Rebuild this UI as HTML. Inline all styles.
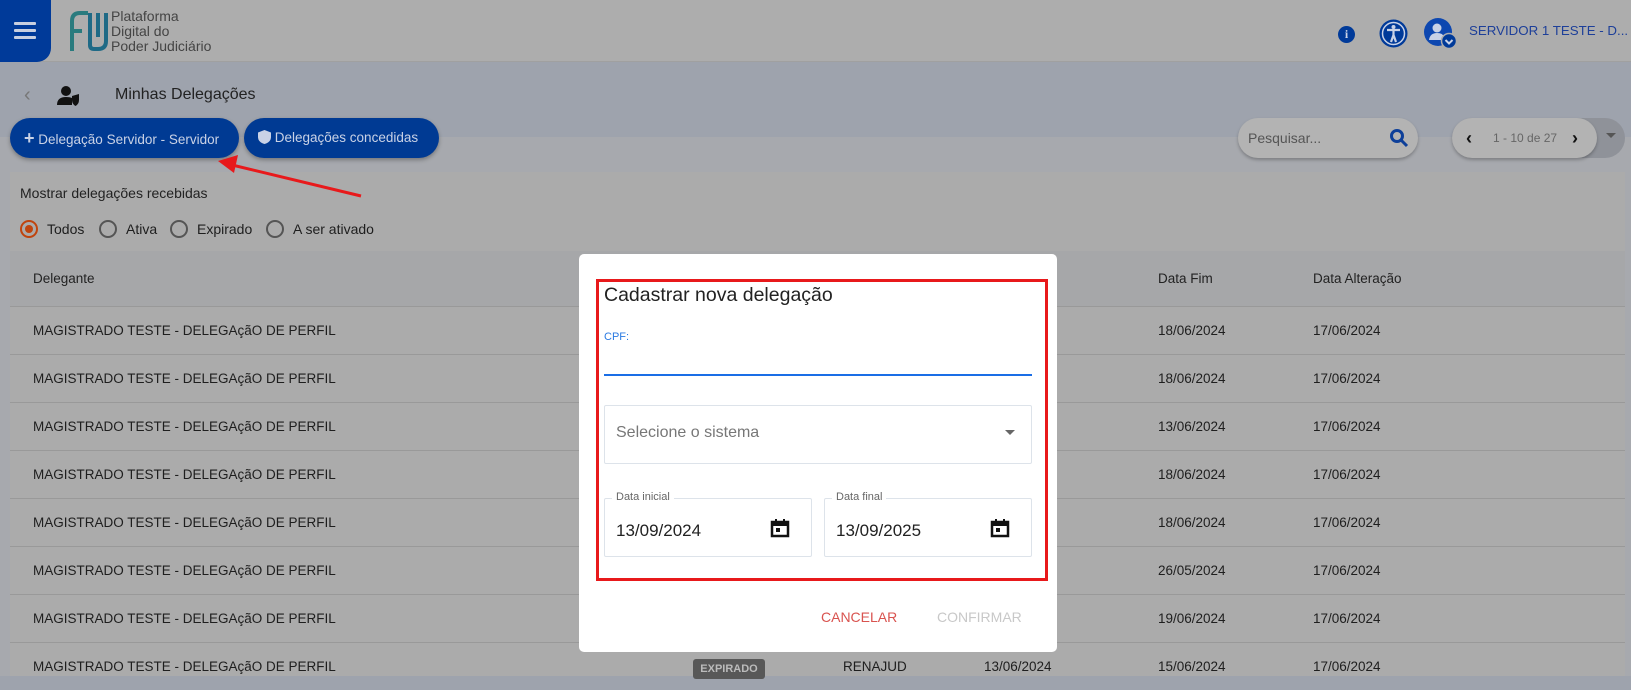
<!DOCTYPE html>
<html><head><meta charset="utf-8"><style>
*{box-sizing:border-box;margin:0;padding:0}
body{width:1631px;height:676px;overflow:hidden;background:#9ea3ad;font-family:"Liberation Sans",Arial,sans-serif;position:relative;color:#1e1e1e}
.a{position:absolute;white-space:nowrap}
.hdr{left:0;top:0;width:1631px;height:62px;background:#adadad;border-bottom:1px solid #a0a0a0}
.ham{left:0;top:0;width:51px;height:62px;background:#003a99;border-bottom-right-radius:14px}
.ham i{position:absolute;left:14px;width:22px;height:3px;background:#c8cfe0;border-radius:1px}
.lower{left:0;top:137px;width:1631px;height:539px;background:#a7a9ae}
.btn{height:40px;top:118px;background:#003a93;border-radius:20px;color:#c9d2e6;font-size:13.5px;line-height:40px;box-shadow:0 2px 4px rgba(0,0,0,.3)}
.card{left:10px;top:172px;width:1615px;height:504px;background:#ababab}
.row{left:10px;width:1615px;height:48px;border-top:1px solid #999;font-size:13.5px;line-height:47px}
.row span,.th span{position:absolute}
.th{left:10px;top:251px;width:1615px;height:55px;background:#a6a7a9;font-size:13.5px;line-height:55px;color:#222}
.radio{width:18px;height:18px;border:2px solid #555;border-radius:50%;top:220px}
.modal{left:579px;top:254px;width:478px;height:398px;background:#fff;border-radius:5px}
.box{border:1px solid #dde3ea;border-radius:2px}
</style></head><body>
<div class="a hdr"></div>
<div class="a ham"><i style="top:22px"></i><i style="top:29px"></i><i style="top:36px"></i></div>
<svg class="a" style="left:68px;top:9px" width="44" height="44" viewBox="0 0 44 44"><g fill="none" stroke-width="4"><path d="M4 42V12Q4 4 12 4H20" stroke="#2a7b7e"/><path d="M4 22H14" stroke="#2a7b7e"/><path d="M22 4V36Q22 40 26 40H30Q38 40 38 32V4" stroke="#1f6a86"/><path d="M30 4V28" stroke="#1f6a86"/></g></svg>
<div class="a" style="left:111px;top:9px;font-size:14px;line-height:15px;color:#444">Plataforma<br>Digital do<br>Poder Judiciário</div>
<div class="a" style="left:1338px;top:26px;width:17px;height:17px;border-radius:50%;background:#003a99;color:#c9d2e6;font:bold 12px/17px serif;text-align:center">i</div>
<svg class="a" style="left:1379px;top:19px" width="29" height="29" viewBox="0 0 29 29"><circle cx="14.5" cy="14.5" r="14" fill="#003a99"/><circle cx="14.5" cy="14.5" r="11" fill="none" stroke="#c9d2e6" stroke-width="1.5"/><circle cx="14.5" cy="8" r="2" fill="#c9d2e6"/><path d="M8 11L21 11M14.5 11V16M12 23L14.5 16L17 23" stroke="#c9d2e6" stroke-width="2.2" fill="none"/></svg>
<svg class="a" style="left:1424px;top:18px" width="36" height="32" viewBox="0 0 36 32"><circle cx="14" cy="14" r="14" fill="#0d47b0"/><circle cx="13" cy="10" r="4.5" fill="#c9d2e6"/><path d="M5 22Q6 15 13 15Q19 15 20 19V22Z" fill="#c9d2e6"/><circle cx="25" cy="23" r="7.5" fill="#003a99" stroke="#adadad" stroke-width="1.5"/><path d="M21.5 22L25 25.5L28.5 22" stroke="#c9d2e6" stroke-width="2" fill="none"/></svg>
<div class="a" style="left:1469px;top:23px;font-size:13.3px;color:#1d3f99">SERVIDOR 1 TESTE - D...</div>
<div class="a lower"></div>
<div class="a" style="left:24px;top:84px;font-size:20px;color:#777">‹</div>
<svg class="a" style="left:57px;top:85px" width="25" height="22" viewBox="0 0 25 22"><circle cx="9" cy="6" r="5" fill="#111"/><path d="M0 20Q0 12 9 12Q13 12 15 13V20Z" fill="#111"/><path d="M15 11L22 9V15Q22 19 18.5 21Q15 19 15 15Z" fill="#111"/></svg>
<div class="a" style="left:115px;top:86px;font-size:16px;color:#222">Minhas Delegações</div>
<div class="a btn" style="left:10px;width:229px;padding-left:14px"><b style="font-size:18px">+</b> Delegação Servidor - Servidor</div>
<div class="a btn" style="left:244px;width:195px;padding-left:14px"><svg width="13" height="14" viewBox="0 0 13 14" style="vertical-align:-2px"><path d="M6.5 0L13 2.5V7Q13 12 6.5 14Q0 12 0 7V2.5Z" fill="#c9d2e6"/></svg> Delegações concedidas</div>
<div class="a" style="left:1238px;top:118px;width:180px;height:40px;border-radius:20px;background:#b3b3b3;box-shadow:0 2px 3px rgba(0,0,0,.25);font-size:14px;line-height:40px;padding-left:10px;color:#555">Pesquisar...</div>
<svg class="a" style="left:1389px;top:128px" width="20" height="20"><circle cx="8" cy="8" r="5.5" fill="none" stroke="#0d3f99" stroke-width="3"/><path d="M12 12L18 18" stroke="#0d3f99" stroke-width="3"/></svg>
<div class="a" style="left:1452px;top:118px;width:173px;height:40px;border-radius:20px;background:#8f9299"></div>
<div class="a" style="left:1452px;top:118px;width:145px;height:40px;border-radius:20px;background:#b3b3b3;box-shadow:0 2px 3px rgba(0,0,0,.25);font-size:12px;line-height:40px;color:#666"><span style="position:absolute;left:14px;font-size:18px;color:#111;font-weight:bold">‹</span><span style="position:absolute;left:41px">1 - 10 de 27</span><span style="position:absolute;left:120px;font-size:18px;color:#111;font-weight:bold">›</span></div>
<div class="a" style="left:1606px;top:133px;border:5px solid transparent;border-top-color:#555"></div>
<div class="a card"></div>
<div class="a" style="left:20px;top:185px;font-size:14px;color:#222">Mostrar delegações recebidas</div>
<div class="a radio" style="left:20px;border-color:#c0440d"><div style="margin:3px;width:8px;height:8px;border-radius:50%;background:#c0440d"></div></div>
<div class="a" style="left:47px;top:221px;font-size:14px">Todos</div>
<div class="a radio" style="left:99px"></div><div class="a" style="left:126px;top:221px;font-size:14px">Ativa</div>
<div class="a radio" style="left:170px"></div><div class="a" style="left:197px;top:221px;font-size:14px">Expirado</div>
<div class="a radio" style="left:266px"></div><div class="a" style="left:293px;top:221px;font-size:14px">A ser ativado</div>
<div class="a th"><span style="left:23px">Delegante</span><span style="left:974px">Data Início</span><span style="left:1148px">Data Fim</span><span style="left:1303px">Data Alteração</span></div>
<div class="a row" style="top:306px"><span style="left:23px">MAGISTRADO TESTE - DELEGAçãO DE PERFIL</span><span style="left:974px">17/06/2024</span><span style="left:1148px">18/06/2024</span><span style="left:1303px">17/06/2024</span></div>
<div class="a row" style="top:354px"><span style="left:23px">MAGISTRADO TESTE - DELEGAçãO DE PERFIL</span><span style="left:974px">17/06/2024</span><span style="left:1148px">18/06/2024</span><span style="left:1303px">17/06/2024</span></div>
<div class="a row" style="top:402px"><span style="left:23px">MAGISTRADO TESTE - DELEGAçãO DE PERFIL</span><span style="left:974px">17/06/2024</span><span style="left:1148px">13/06/2024</span><span style="left:1303px">17/06/2024</span></div>
<div class="a row" style="top:450px"><span style="left:23px">MAGISTRADO TESTE - DELEGAçãO DE PERFIL</span><span style="left:974px">17/06/2024</span><span style="left:1148px">18/06/2024</span><span style="left:1303px">17/06/2024</span></div>
<div class="a row" style="top:498px"><span style="left:23px">MAGISTRADO TESTE - DELEGAçãO DE PERFIL</span><span style="left:974px">17/06/2024</span><span style="left:1148px">18/06/2024</span><span style="left:1303px">17/06/2024</span></div>
<div class="a row" style="top:546px"><span style="left:23px">MAGISTRADO TESTE - DELEGAçãO DE PERFIL</span><span style="left:974px">17/06/2024</span><span style="left:1148px">26/05/2024</span><span style="left:1303px">17/06/2024</span></div>
<div class="a row" style="top:594px"><span style="left:23px">MAGISTRADO TESTE - DELEGAçãO DE PERFIL</span><span style="left:974px">17/06/2024</span><span style="left:1148px">19/06/2024</span><span style="left:1303px">17/06/2024</span></div>
<div class="a row" style="top:642px"><span style="left:23px">MAGISTRADO TESTE - DELEGAçãO DE PERFIL</span><span style="left:683px;top:16px;height:20px;width:72px;background:#585858;color:#bbb;font-size:11px;font-weight:bold;line-height:20px;text-align:center;border-radius:3px">EXPIRADO</span><span style="left:833px">RENAJUD</span><span style="left:974px">13/06/2024</span><span style="left:1148px">15/06/2024</span><span style="left:1303px">17/06/2024</span></div>
<svg class="a" style="left:0;top:0" width="400" height="220"><path d="M361 196L228 164" stroke="#e8191b" stroke-width="3"/><path d="M218 161L238 155L234 173Z" fill="#e8191b"/></svg>
<div class="a modal"></div>
<div class="a" style="left:596px;top:279px;width:452px;height:302px;border:3px solid #e8191b"></div>
<div class="a" style="left:604px;top:284px;font-size:19.5px;color:#222">Cadastrar nova delegação</div>
<div class="a" style="left:604px;top:331px;font-size:11px;color:#2a7ae2">CPF:</div>
<div class="a" style="left:604px;top:374px;width:428px;height:2px;background:#1a6ee6"></div>
<div class="a box" style="left:604px;top:405px;width:428px;height:59px"></div>
<div class="a" style="left:616px;top:424px;font-size:16px;color:#777">Selecione o sistema</div>
<div class="a" style="left:1005px;top:430px;border:5px solid transparent;border-top-color:#666"></div>
<div class="a box" style="left:604px;top:498px;width:208px;height:59px"></div>
<div class="a box" style="left:824px;top:498px;width:208px;height:59px"></div>
<div class="a" style="left:612px;top:491px;background:#fff;padding:0 4px;font-size:11px;color:#666">Data inicial</div>
<div class="a" style="left:832px;top:491px;background:#fff;padding:0 4px;font-size:11px;color:#666">Data final</div>
<div class="a" style="left:616px;top:521px;font-size:17px;color:#222">13/09/2024</div>
<div class="a" style="left:836px;top:521px;font-size:17px;color:#222">13/09/2025</div>
<svg class="a" style="left:770px;top:518px" width="20" height="20"><rect x="2" y="4" width="16" height="14" fill="none" stroke="#111" stroke-width="2.5"/><rect x="2" y="4" width="16" height="4" fill="#111"/><rect x="5" y="1" width="2" height="4" fill="#111"/><rect x="13" y="1" width="2" height="4" fill="#111"/><rect x="6" y="10" width="4" height="4" fill="#111"/></svg>
<svg class="a" style="left:990px;top:518px" width="20" height="20"><rect x="2" y="4" width="16" height="14" fill="none" stroke="#111" stroke-width="2.5"/><rect x="2" y="4" width="16" height="4" fill="#111"/><rect x="5" y="1" width="2" height="4" fill="#111"/><rect x="13" y="1" width="2" height="4" fill="#111"/><rect x="6" y="10" width="4" height="4" fill="#111"/></svg>
<div class="a" style="left:821px;top:609px;font-size:14px;color:#d9534f">CANCELAR</div>
<div class="a" style="left:937px;top:609px;font-size:14px;color:#c8c8c8">CONFIRMAR</div>
</body></html>
